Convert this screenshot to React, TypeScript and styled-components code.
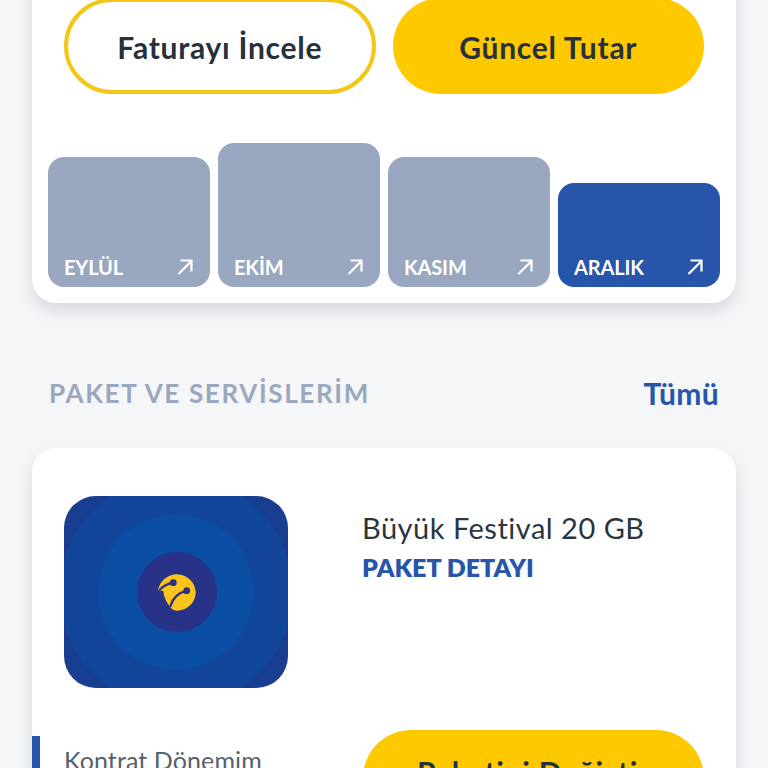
import React from "react";
import styled, { createGlobalStyle } from "styled-components";

const Global = createGlobalStyle`
  html, body { margin: 0; padding: 0; background: #f4f6f8; }
  * { box-sizing: border-box; }
`;

const Viewport = styled.div`
  height: 768px;
  overflow: hidden;
  background: #f4f6f8;
  font-family: Lato, "Open Sans", sans-serif;
  padding: 0 32px;
`;

const Card = styled.section`
  background: #fff;
  border-radius: 24px;
  box-shadow: 0 8px 16px rgba(120, 130, 150, 0.24);
`;

const BillCard = styled(Card)`
  margin-top: -40px;
  padding: 38px 16px 16px;
`;

const Actions = styled.div`
  display: grid;
  grid-template-columns: 1fr 1fr;
  gap: 17px;
  padding: 0 16px;
`;

const PillButton = styled.button<{ $outline?: boolean }>`
  height: 96px;
  border-radius: 48px;
  border: ${(p) => (p.$outline ? "4px solid #f3c716" : "none")};
  background: ${(p) => (p.$outline ? "#fff" : "#ffc900")};
  color: #27313d;
  font: 700 30px Lato, sans-serif;
  letter-spacing: 0.75px;
  padding: 2px 0 0;
`;

const Bars = styled.div`
  display: flex;
  align-items: flex-end;
  gap: 8px;
  margin-top: 49px;
`;

const Bar = styled.div<{ $h: number; $active?: boolean }>`
  flex: 1;
  height: ${(p) => p.$h}px;
  border-radius: 16px;
  background: ${(p) => (p.$active ? "#2755a9" : "#99a7c0")};
  display: flex;
  align-items: flex-end;
  justify-content: space-between;
  padding: 0 16px 8px 16px;
  color: #fff;
`;

const BarLabel = styled.span`
  font: 700 20px/24px Lato, sans-serif;
  letter-spacing: -0.15px;
`;

const Arrow = styled.svg`
  width: 18px;
  height: 18px;
  margin-bottom: 3px;
`;

const SectionHead = styled.div`
  display: flex;
  justify-content: space-between;
  align-items: center;
  height: 40px;
  margin: 70px 17px 35px;
`;

const SectionTitle = styled.h2`
  margin: 0;
  color: #9aa7be;
  font: 700 26px Lato, sans-serif;
  letter-spacing: 1.65px;
`;

const AllLink = styled.a`
  color: #2755a9;
  font: 700 30px Lato, sans-serif;
  letter-spacing: 0.3px;
`;

const PackageCard = styled(Card)`
  padding-top: 48px;
  height: 500px;
`;

const PackageRow = styled.div`
  display: flex;
  padding: 0 32px;
  gap: 74px;
`;

const Artwork = styled.div`
  width: 224px;
  height: 192px;
  flex: none;
  border-radius: 32px;
  display: flex;
  align-items: center;
  justify-content: center;
  background: radial-gradient(
    circle at 50% 50%,
    #0b4fa4 0 77px,
    #11469b 78px 116px,
    #193d90 117px
  );
`;

const LogoDisc = styled.div`
  width: 80px;
  height: 80px;
  margin-left: 1px;
  border-radius: 50%;
  background: #283286;
  display: flex;
  align-items: center;
  justify-content: center;
`;

const PackageInfo = styled.div`
  padding-top: 14px;
`;

const PackageName = styled.div`
  color: #2b3540;
  font: 400 29px/36px Lato, sans-serif;
  letter-spacing: 0.5px;
`;

const PackageLink = styled.div`
  color: #2755a9;
  font: 800 25px/36px Lato, sans-serif;
  margin-top: 3px;
`;

const ContractRow = styled.div`
  display: flex;
  justify-content: space-between;
  margin-top: 42px;
  padding-right: 32px;
`;

const ContractLabel = styled.div`
  height: 80px;
  margin-top: 6px;
  border-left: 8px solid #2755a9;
  border-top-right-radius: 4px;
  padding: 6px 0 0 24px;
  color: #56616d;
  font: 400 25px/36px Lato, sans-serif;
  letter-spacing: 0.1px;
`;

const ChangeButton = styled(PillButton)`
  width: 341px;
  padding: 0 0 12px;
`;

const ArrowIcon = () => (
  <Arrow viewBox="0 0 18 18" fill="none" stroke="#fff" strokeWidth="2.2">
    <path d="M2.5 16 15 3.5M4.5 2.5H15.5V13.5" />
  </Arrow>
);

const Logo = () => (
  <svg width="40" height="40" viewBox="0 0 40 40">
    <path
      d="M1 18C3 9 10.5 2.2 20 2.2 30 2.2 38.7 10.5 38.7 20.5 38.7 30.5 30 38.7 20 38.7 17.5 38.7 15.5 37.5 13.5 35.7 9.5 30 6.5 24.5 6.5 19.2 4.5 18.8 3 18.3 1 18Z"
      fill="#fcc41c"
    />
    <path d="M3 17.5C7 13.5 11 11.2 16.3 10.7" fill="none" stroke="#283286" strokeWidth="2.4" strokeLinecap="round" />
    <path d="M13.5 34C15.5 27 21 21 29.7 18.7" fill="none" stroke="#283286" strokeWidth="2.4" strokeLinecap="round" />
    <circle cx="16.3" cy="10.7" r="3.4" fill="#283286" />
    <circle cx="29.7" cy="18.7" r="3.4" fill="#283286" />
  </svg>
);

const months = [
  { name: "EYLÜL", h: 130 },
  { name: "EKİM", h: 144 },
  { name: "KASIM", h: 130 },
  { name: "ARALIK", h: 104, active: true },
];

export default function App() {
  return (
    <Viewport>
      <Global />
      <BillCard>
        <Actions>
          <PillButton $outline>Faturayı İncele</PillButton>
          <PillButton>Güncel Tutar</PillButton>
        </Actions>
        <Bars>
          {months.map((m) => (
            <Bar key={m.name} $h={m.h} $active={m.active}>
              <BarLabel>{m.name}</BarLabel>
              <ArrowIcon />
            </Bar>
          ))}
        </Bars>
      </BillCard>
      <SectionHead>
        <SectionTitle>PAKET VE SERVİSLERİM</SectionTitle>
        <AllLink>Tümü</AllLink>
      </SectionHead>
      <PackageCard>
        <PackageRow>
          <Artwork>
            <LogoDisc>
              <Logo />
            </LogoDisc>
          </Artwork>
          <PackageInfo>
            <PackageName>Büyük Festival 20 GB</PackageName>
            <PackageLink>PAKET DETAYI</PackageLink>
          </PackageInfo>
        </PackageRow>
        <ContractRow>
          <ContractLabel>Kontrat Dönemim</ContractLabel>
          <ChangeButton>Paketini Değiştir</ChangeButton>
        </ContractRow>
      </PackageCard>
    </Viewport>
  );
}
